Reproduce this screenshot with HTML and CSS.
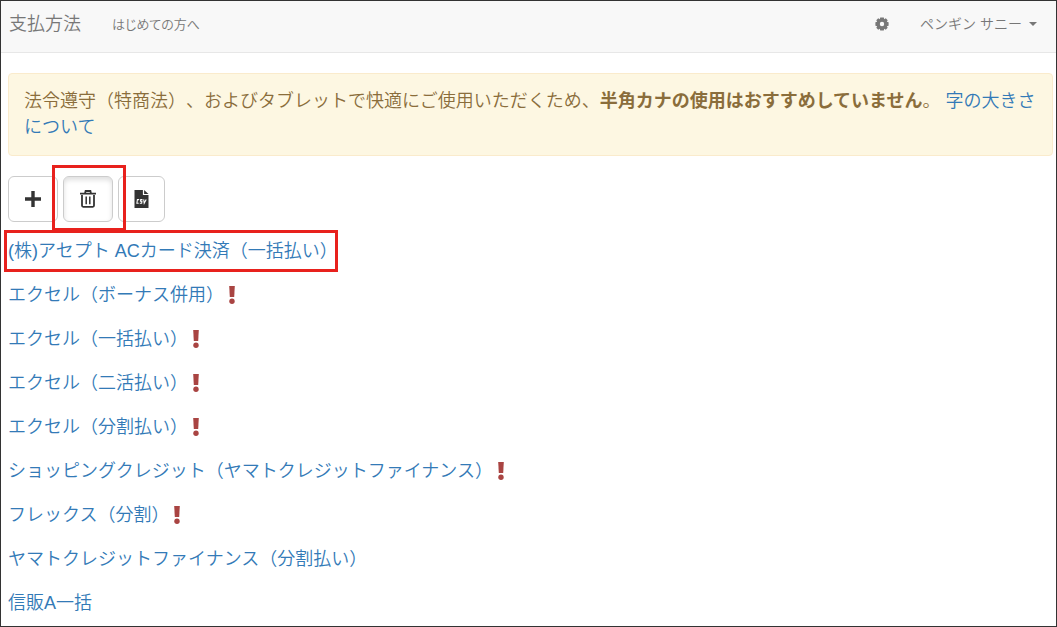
FILE: index.html
```html
<!DOCTYPE html>
<html lang="ja">
<head>
<meta charset="utf-8">
<meta name="viewport" content="width=device-width, initial-scale=1">
<title>支払方法</title>
<link rel="stylesheet" href="styles.css">
</head>
<body>
<svg class="sprite" aria-hidden="true">
  <symbol id="bang" viewBox="0 0 8 18"><path d="M1.2 0h5.6L6.2 11H1.8z"/><circle cx="4" cy="15.2" r="2.7"/></symbol>
</svg>
<div class="page">
  <nav class="navbar">
    <a class="brand" href="#">支払方法</a>
    <a class="nav-link" href="#">はじめての方へ</a>
    <button class="nav-button settings" type="button" aria-label="設定">
      <svg class="gear" viewBox="0 0 14 14"><path fill-rule="evenodd" d="M5.2 0.4h3.6l.4 1.8 1.6-.9 1.9 1.9-.9 1.6 1.8.4v3.6l-1.8.4.9 1.6-1.9 1.9-1.6-.9-.4 1.8H5.2l-.4-1.8-1.6.9-1.9-1.9.9-1.6-1.8-.4V5.2l1.8-.4-.9-1.6 1.9-1.9 1.6.9zM7 4.8a2.2 2.2 0 1 0 0 4.4 2.2 2.2 0 0 0 0-4.4z"/></svg>
    </button>
    <button class="nav-button user" type="button">ペンギン サニー<span class="caret"></span></button>
  </nav>
  <main class="content">
    <p class="alert">法令遵守（特商法）、およびタブレットで快適にご使用いただくため、<strong>半角カナの使用はおすすめしていません</strong>。 <a href="#">字の大きさについて</a></p>
    <div class="toolbar">
      <button class="tool" type="button" aria-label="追加">
        <svg class="icon" viewBox="0 0 18 18"><path d="M7.3 1h3.4v6.3H17v3.4h-6.3V17H7.3v-6.3H1V7.3h6.3z"/></svg>
      </button>
      <span class="marked marked-tool">
        <button class="tool active" type="button" aria-label="削除" aria-pressed="true">
          <svg class="icon" viewBox="0 0 18 18"><path d="M1 3.6h16M6 3.4L6.6 1h4.8l.6 2.4M3 5v10.6q0 1.2 1.2 1.2h9.6q1.2 0 1.2-1.2V5" fill="none" stroke="currentColor" stroke-width="1.8"/><path d="M7.2 6.6v7.6M10.8 6.6v7.6" fill="none" stroke="currentColor" stroke-width="1.5"/></svg>
        </button>
      </span>
      <button class="tool" type="button" aria-label="CSV">
        <svg class="icon-file" viewBox="0 0 14 18"><path d="M0 0h8.4v5H14v13H0z"/><path d="M9.6 0L14 4H9.6z"/><path d="M4.7 9.6H2.9l-.5 3.6H4.2M8 9.6H6.2L6 11.3h1.4l-.2 1.9H5.3M9.2 9.4l.5 3.8 2-3.8" fill="none" stroke="#fff" stroke-width="1.1"/></svg>
      </button>
    </div>
    <ul class="methods">
      <li><a class="marked marked-row" href="#">(株)アセプト ACカード決済（一括払い）</a></li>
      <li><a href="#">エクセル（ボーナス併用）</a><svg class="bang"><use href="#bang"/></svg></li>
      <li><a href="#">エクセル（一括払い）</a><svg class="bang"><use href="#bang"/></svg></li>
      <li><a href="#">エクセル（二活払い）</a><svg class="bang"><use href="#bang"/></svg></li>
      <li><a href="#">エクセル（分割払い）</a><svg class="bang"><use href="#bang"/></svg></li>
      <li><a href="#">ショッピングクレジット（ヤマトクレジットファイナンス）</a><svg class="bang"><use href="#bang"/></svg></li>
      <li><a href="#">フレックス（分割）</a><svg class="bang"><use href="#bang"/></svg></li>
      <li><a href="#">ヤマトクレジットファイナンス（分割払い）</a></li>
      <li><a href="#">信販A一括</a></li>
    </ul>
  </main>
</div>
</body>
</html>
```
FILE: styles.css
```css
* { box-sizing: border-box; }
body {
  margin: 0;
  background: #fff;
  color: #333;
  font: 350 18px/26px "Liberation Sans", "Noto Sans CJK JP", sans-serif;
  text-spacing-trim: space-all;
}
a { color: #337ab7; text-decoration: none; }
button { font: inherit; cursor: pointer; }
svg { fill: currentColor; }
.sprite { position: absolute; width: 0; height: 0; }
.page { min-height: 100vh; border: 1px solid #333; }

.navbar {
  display: flex;
  align-items: center;
  height: 52px;
  padding: 0 19px 6px 8px;
  background: #f8f8f8;
  border-bottom: 1px solid #e7e7e7;
}
.brand, .nav-link, .nav-button { color: #777; }
.nav-link {
  margin-left: 31px;
  padding-top: 2px;
  font-size: 13px;
  font-feature-settings: "palt";
}
.nav-button {
  display: flex;
  align-items: center;
  padding: 0;
  border: 0;
  background: none;
  font-size: 14px;
}
.settings { margin-left: auto; }
.user { margin-left: 31px; }
.gear { width: 14px; height: 14px; }
.caret {
  margin-left: 7px;
  border: 4px solid transparent;
  border-top-color: currentColor;
  border-bottom: 0;
}

.content { padding: 20px 3px 0 7px; }
.alert {
  margin: 0 0 20px;
  padding: 14px 15px 15px;
  border: 1px solid #faebcc;
  border-radius: 4px;
  background: #fdf7e2;
  color: #8a6d3b;
}
.alert strong { font-weight: 700; }

.toolbar { display: flex; gap: 5px; margin-bottom: 16px; }
.tool {
  display: flex;
  align-items: center;
  height: 46px;
  padding: 0 15px;
  border: 1px solid #ccc;
  border-radius: 6px;
  background: #fff;
  color: #333;
}
.tool.active { box-shadow: inset 0 3px 5px rgba(0, 0, 0, 0.125); }
.icon { width: 18px; height: 18px; }
.icon-file { width: 15px; height: 18px; }

.marked { position: relative; }
.marked::after {
  content: "";
  position: absolute;
  border: 3px solid #e8211d;
  pointer-events: none;
}
.marked-tool::after { inset: -11px -13px -9px -11px; }
.marked-row::after { inset: -8px 0 -8px -4px; }

.methods {
  display: grid;
  gap: 18px;
  margin: 0;
  padding: 0 0 8px;
  list-style: none;
}
.methods li { display: flex; align-items: center; }
.bang { width: 8px; height: 18px; margin-left: 4px; color: #a94442; }
```
